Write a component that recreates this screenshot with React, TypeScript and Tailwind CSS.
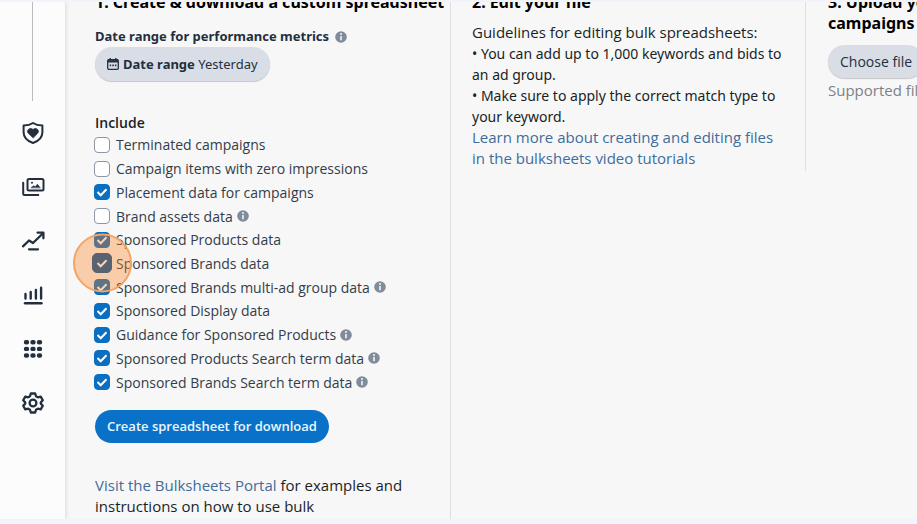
import type { ReactNode } from 'react';

const options = [
  { label: 'Terminated campaigns', checked: false },
  { label: 'Campaign items with zero impressions', checked: false },
  { label: 'Placement data for campaigns', checked: true },
  { label: 'Brand assets data', checked: false, info: true },
  { label: 'Sponsored Products data', checked: true },
  { label: 'Sponsored Brands data', checked: true, active: true },
  { label: 'Sponsored Brands multi-ad group data', checked: true, info: true },
  { label: 'Sponsored Display data', checked: true },
  { label: 'Guidance for Sponsored Products', checked: true, info: true },
  { label: 'Sponsored Products Search term data', checked: true, info: true },
  { label: 'Sponsored Brands Search term data', checked: true, info: true },
];

function InfoIcon() {
  return (
    <svg className="size-3 shrink-0" viewBox="0 0 12 12" aria-hidden="true">
      <circle cx="6" cy="6" r="5.8" fill="#808b9b" />
      <path d="M6 5v4.3" fill="none" stroke="#f3f4f6" strokeWidth="1.6" />
      <circle cx="6" cy="3" r="1" fill="#f3f4f6" />
    </svg>
  );
}

function CalendarIcon() {
  return (
    <svg className="size-3 shrink-0" viewBox="0 0 12 12" fill="none" stroke="#232f3f" aria-hidden="true">
      <rect x="0.7" y="1.7" width="10.6" height="9.6" rx="1" strokeWidth="1.3" />
      <path d="M1 3.3h10" strokeWidth="2.4" />
      <path d="M3.2 0v2M8.8 0v2" strokeWidth="1.4" />
      <path d="M2.7 7.3h1.5M5.3 7.3h1.5M7.9 7.3h1.5" strokeWidth="1.8" />
    </svg>
  );
}

function NavButton({ label, children }: { label: string; children: ReactNode }) {
  return (
    <button type="button" aria-label={label} className="size-6 text-[#232f3e]">
      <svg viewBox="0 0 24 24" className="size-6" fill="none" stroke="currentColor" strokeWidth="2" strokeLinecap="round" strokeLinejoin="round">
        {children}
      </svg>
    </button>
  );
}

function Sidebar() {
  return (
    <nav className="flex w-[65px] shrink-0 flex-col items-center bg-[#fcfcfc] shadow-[1px_0_4px_rgba(0,0,0,0.12)]">
      <div className="h-[99px] w-px shrink-0 bg-[#b9bbbe]" />
      <div className="mt-5 flex flex-col gap-[30px]">
        <NavButton label="Brand protection">
          <path d="M12 2c2.8 1.9 5.8 2.5 9.4 2.6v6.6c0 5.4-3.8 8.8-9.4 10.8-5.6-2-9.4-5.4-9.4-10.8V4.6C6.2 4.5 9.2 3.9 12 2z" />
          <path d="M12 16.8l-4.9-4.8C5 9.200 9.200 5.600 12 8.600c2.800-3 7 .6 4.900 3.400z" fill="currentColor" strokeWidth="0.8" />
        </NavButton>
        <NavButton label="Creative assets">
          <rect x="6.5" y="4" width="16" height="11.5" rx="1.5" />
          <path d="M2.2 7.8v10.7c0 1 .5 1.5 1.5 1.5h13.6" />
          <path d="M10.3 12.6l2.200-1.800 1.800 1 2.100-2.600 2.700 3.400z" fill="currentColor" strokeWidth="0.6" />
          <circle cx="11" cy="7.8" r="1" fill="currentColor" stroke="none" />
        </NavButton>
        <NavButton label="Trends">
          <path d="M2 17.3l6-5.800 4 2.500L22 4.200" strokeWidth="2.3" />
          <path d="M16.600 3.700h5.800v5.600M8 20.300h9" strokeWidth="2.3" />
        </NavButton>
        <NavButton label="Reports">
          <path d="M4.500 11v4.500M9.700 9v6.500M14.900 7v8.500M20.100 4.800v10.700" strokeWidth="2.4" />
          <path d="M4 20.300h16.500" strokeWidth="2.4" />
        </NavButton>
        <NavButton label="Apps">
          <path d="M5 5.300h1M11.500 5.300h1M18 5.300h1M5 11.900h1M11.500 11.900h1M18 11.900h1M5 18.500h1M11.500 18.500h1M18 18.500h1" strokeWidth="4.4" />
        </NavButton>
        <NavButton label="Settings">
          <path d="M9.800 2.500h4.400l.8 2.800 1.800 1 2.900-.7 2.100 3.700-2 2.100v1.200l2 2.100-2.100 3.700-2.900-.7-1.800 1-.8 2.800H9.800L9 18.700l-1.800-1-2.900.7-2.100-3.700 2-2.100v-1.200l-2-2.100 2.100-3.700 2.900.7 1.800-1z" strokeWidth="2.3" />
          <circle cx="12" cy="12" r="3.4" strokeWidth="2.3" />
        </NavButton>
      </div>
    </nav>
  );
}

type OptionProps = { label: string; checked: boolean; info?: boolean; active?: boolean };

function Option({ label, checked, info, active }: OptionProps) {
  return (
    <li className="flex items-center gap-1">
      <label className="relative flex items-center gap-[6px] whitespace-nowrap">
        <span className="relative grid size-4 shrink-0 place-items-center">
          <input
            type="checkbox"
            defaultChecked={checked}
            className={
              active
                ? 'peer col-start-1 row-start-1 -m-[2px] size-5 appearance-none rounded-[5px] border border-[#8d96a3] bg-white checked:border-[#0054a0] checked:bg-[#0054a0]'
                : 'peer col-start-1 row-start-1 size-4 appearance-none rounded-[4px] border border-[#8d96a3] bg-white checked:border-[#0a6fc0] checked:bg-[#0a6fc0]'
            }
          />
          <svg className="pointer-events-none invisible relative col-start-1 row-start-1 size-3 peer-checked:visible" viewBox="0 0 12 12" fill="none" stroke="white" strokeWidth="2">
            <path d="M1.5 6l3.2 3.2 5.8-6" />
          </svg>
        </span>
        {label}
        {active && (
          <span className="pointer-events-none absolute -left-[21px] top-1/2 z-10 size-[59px] -translate-y-1/2 rounded-full border-2 border-[#f3a467] bg-[#fb7f1b]/35" />
        )}
      </label>
      {info && <InfoIcon />}
    </li>
  );
}

export default function App() {
  return (
    <div className="flex h-screen flex-col overflow-hidden border-t-2 border-b-5 border-[#f0f3fa] bg-[#f7f7f7] font-['Open_Sans','Noto_Sans',sans-serif] text-[15px] leading-[21px] text-[#1a1f26]">
      <div className="flex min-h-0 flex-1">
        <Sidebar />
        <main className="flex min-w-0 flex-1 items-start overflow-hidden pl-[30px]">
          <section className="-mt-[10px] w-[355px] shrink-0 pb-4">
            <h2 className="whitespace-nowrap font-['Noto_Sans',sans-serif] text-[16px] font-bold text-black">1. Create &amp; download a custom spreadsheet</h2>
            <div className="mt-[13px] flex items-center gap-[6px] whitespace-nowrap font-['Noto_Sans',sans-serif] text-[13px] font-bold text-[#232f3f]">
              Date range for performance metrics
              <InfoIcon />
            </div>
            <button type="button" className="flex h-[34px] items-center gap-1 whitespace-nowrap rounded-full bg-[#d9dee6] px-3 font-['Noto_Sans',sans-serif] text-[13px] text-[#232f3f] shadow-[0_1px_1px_rgba(0,0,0,0.2)]">
              <CalendarIcon />
              <span><b>Date range</b> Yesterday</span>
            </button>
            <fieldset className="mt-[31px]">
              <legend className="text-[14px] font-semibold">Include</legend>
              <ul className="-ml-px grid h-[261px] auto-rows-fr text-[14px] text-[#333d4a]">
                {options.map((o) => <Option key={o.label} {...o} />)}
              </ul>
            </fieldset>
            <button type="button" className="mt-4 h-[33px] whitespace-nowrap rounded-full bg-[#0972c8] px-3 text-[13px] font-semibold text-[#edf6ff]">
              Create spreadsheet for download
            </button>
            <p className="mt-8 pr-8">
              <a href="#portal" className="text-[#3e6d9c]">Visit the Bulksheets Portal</a> for examples and instructions on how to use bulk
            </p>
          </section>
          <section className="w-[356px] shrink-0 self-stretch border-l border-[#dcdee1]">
            <div className="-mt-[10px] h-[179px] border-r border-[#dcdee1] pl-[21px] pr-5">
              <h2 className="font-['Noto_Sans',sans-serif] text-[16px] font-bold text-black">2. Edit your file</h2>
              <div className="mt-[9px]">
                <p>Guidelines for editing bulk spreadsheets:</p>
                <div className="font-['Noto_Sans',sans-serif] text-[14px]">
                  <p>• You can add up to 1,000 keywords and bids to an ad group.</p>
                  <p>• Make sure to apply the correct match type to your keyword.</p>
                </div>
                <a href="#tutorials" className="text-[#3e6d9c]">Learn more about creating and editing files<br />in the bulksheets video tutorials</a>
              </div>
            </div>
          </section>
          <section className="-mt-[10px] w-[355px] shrink-0 pl-[22px]">
            <h2 className="w-[180px] font-['Noto_Sans',sans-serif] text-[16px] font-bold text-black">3. Upload your campaigns</h2>
            <button type="button" className="mt-[11px] h-[33px] whitespace-nowrap rounded-full bg-[#d9dee6] px-3 text-[14px] text-[#232f3f] shadow-[0_1px_1px_rgba(0,0,0,0.2)]">
              Choose file
            </button>
            <p className="mt-[2px] text-[#7d8186]">Supported file types</p>
          </section>
        </main>
      </div>
    </div>
  );
}
